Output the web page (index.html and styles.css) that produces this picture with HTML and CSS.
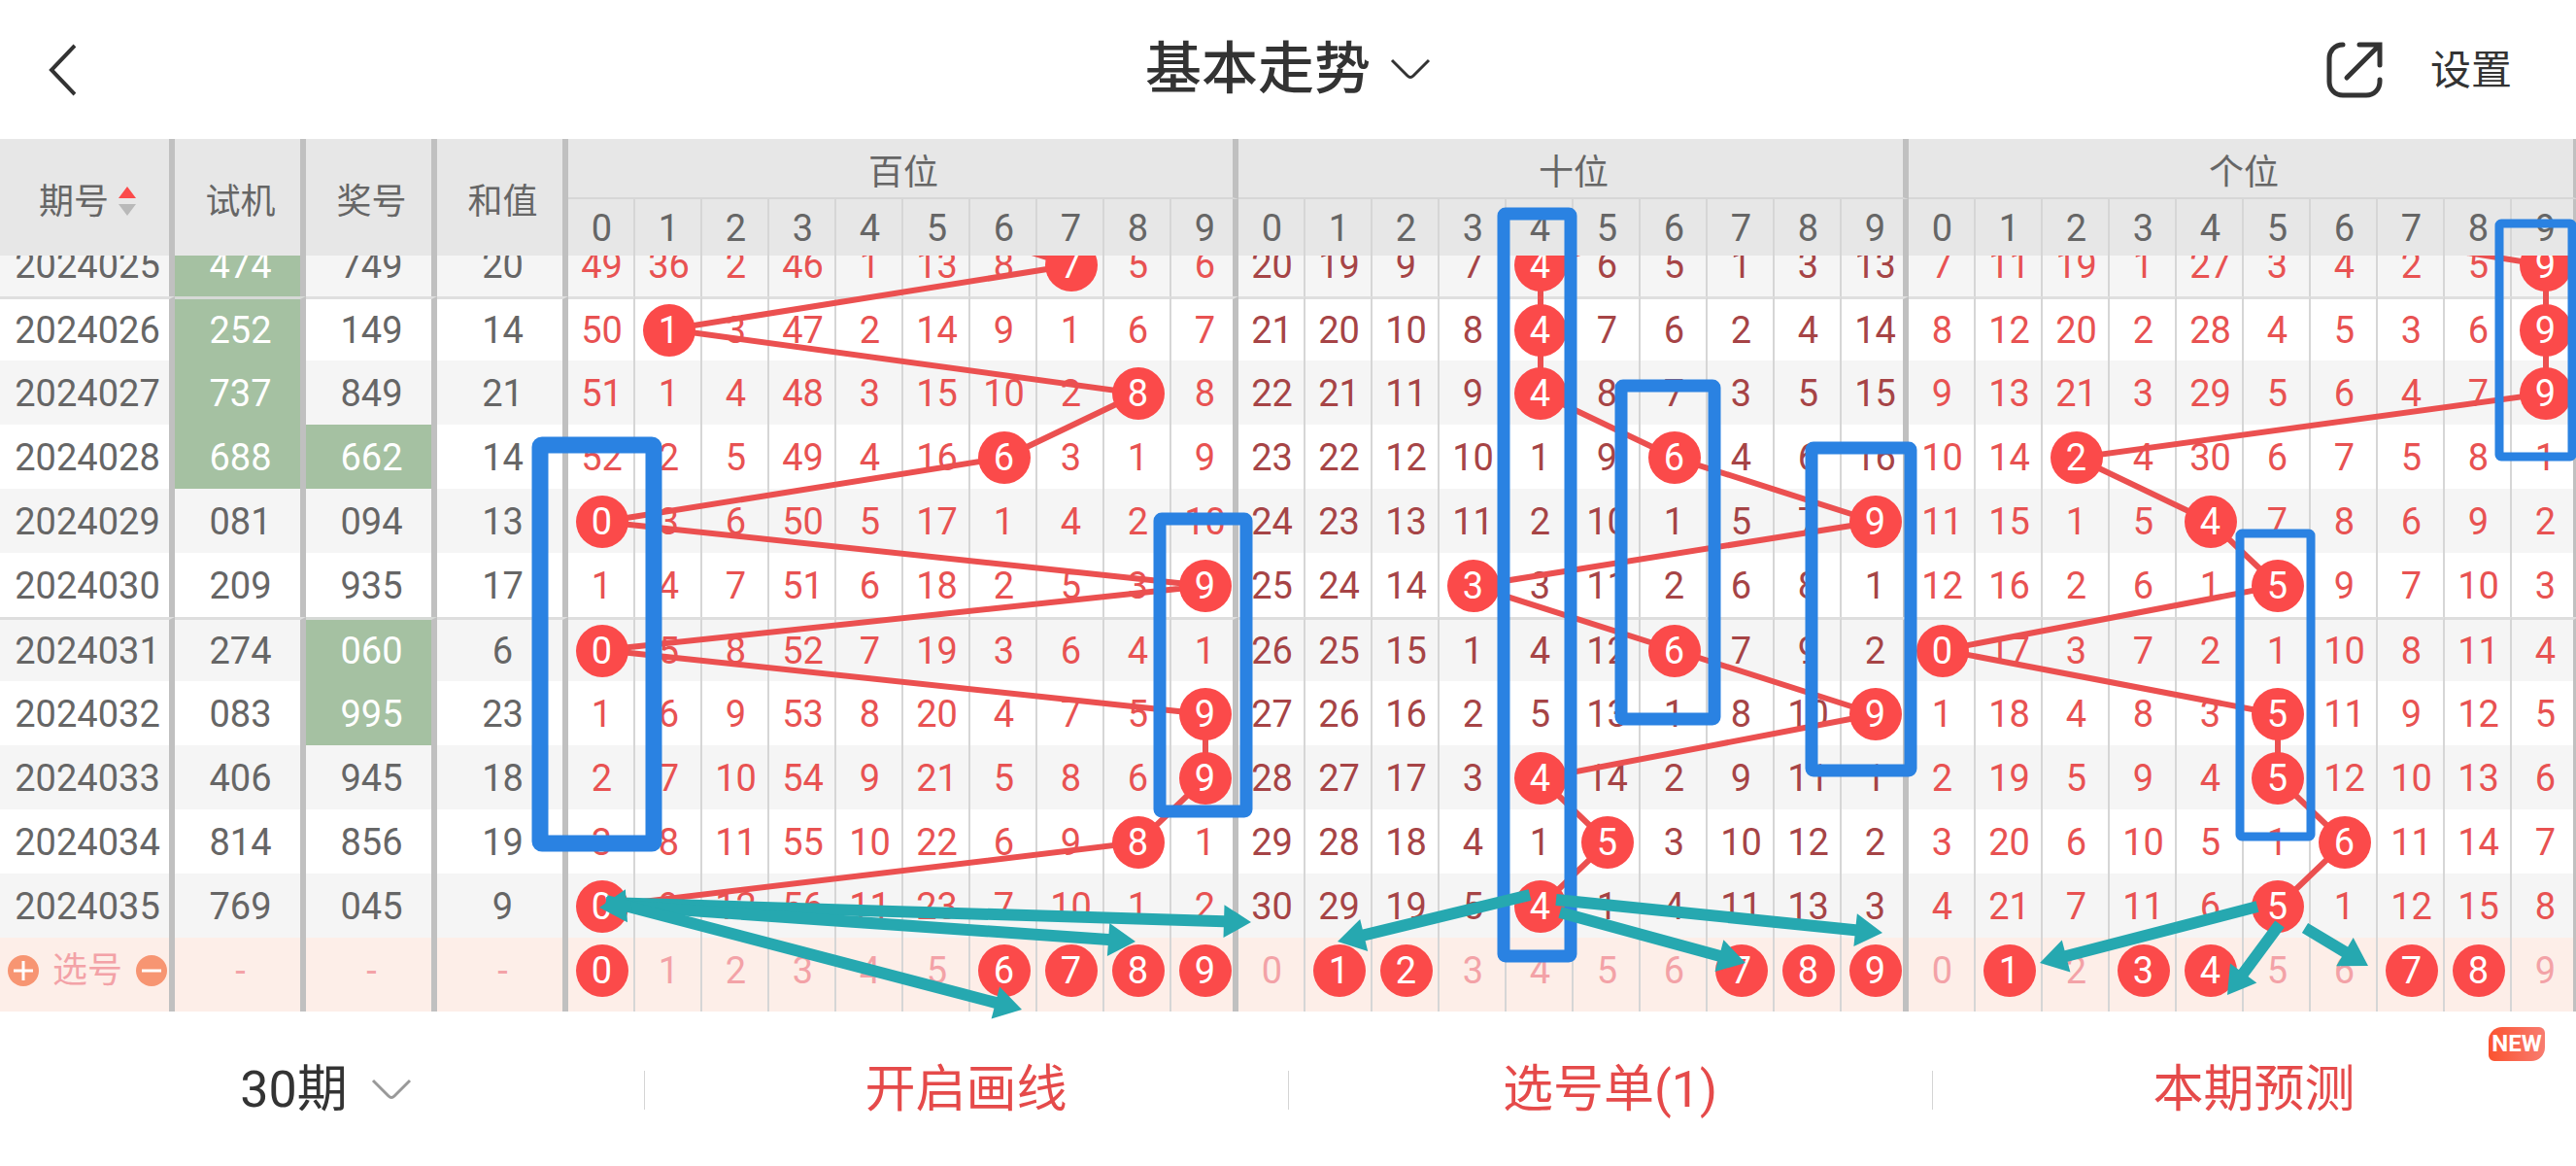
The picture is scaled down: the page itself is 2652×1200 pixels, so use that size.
FILE: index.html
```html
<!DOCTYPE html>
<html lang="zh-CN">
<head>
  <meta charset="UTF-8" />
  <meta name="viewport" content="width=device-width, initial-scale=1.0"/>
  <title>基本走势</title>
  <link rel="stylesheet" href="styles.css">
</head>
<body>

  <header class="topbar">
    <button class="back-btn" type="button" aria-label="返回">
      <svg width="28" height="54" viewBox="0 0 28 54"><path d="M27 2 L3 27 L27 52" /></svg>
    </button>
    <h1 class="title">
      <button class="title-btn" type="button">基本走势
        <svg width="42" height="24" viewBox="0 0 42 24"><path d="M2 2 L18 18 Q21 21 24 18 L40 2" /></svg>
      </button>
    </h1>
    <div class="actions">
      <button class="share-btn" type="button" aria-label="分享">
        <svg width="60" height="60" viewBox="0 0 60 60"><path d="M18 4 C9 4 4 11 4 18 V42 C4 50 10 56 18 56 H42 C50 56 56 50 56 42 V40 M35 4 H56 V25 M22 38 L55 5" /></svg>
      </button>
      <button class="settings-btn" type="button">设置</button>
    </div>
  </header>

  <main class="chart">
    <table class="trend trend-head">
      <colgroup id="head-cols"></colgroup>
      <thead>
        <tr class="head-top">
          <th rowspan="2" class="sep">期号<span class="sort"><i class="up"></i><i class="down"></i></span></th>
          <th rowspan="2" class="sep">试机</th>
          <th rowspan="2" class="sep">奖号</th>
          <th rowspan="2" class="sep">和值</th>
          <th colspan="10" class="sep place">百位</th>
          <th colspan="10" class="sep place">十位</th>
          <th colspan="10" class="sep place">个位</th>
        </tr>
        <tr class="head-digits" id="head-digits"></tr>
      </thead>
    </table>

    <div class="trend-scroll">
      <div class="trend-inner">
        <table class="trend trend-body">
          <colgroup id="body-cols"></colgroup>
          <tbody id="rows"></tbody>
        </table>
        <svg class="lines" id="lines" viewBox="0 0 2655 802" preserveAspectRatio="none"></svg>
      </div>
    </div>

    <!-- hand-drawn marks on top of the chart -->
    <svg class="marks" viewBox="0 0 2652 898" preserveAspectRatio="none">
      <g class="boxes">
        <rect x="556" y="315" width="117" height="410" rx="2" stroke-width="17" />
        <rect x="1194" y="391" width="89" height="301" rx="2" stroke-width="13" />
        <rect x="1548" y="77" width="69" height="764" rx="2" stroke-width="13" />
        <rect x="1669" y="254" width="96" height="343" rx="2" stroke-width="13" />
        <rect x="1865" y="318" width="102" height="332" rx="2" stroke-width="13" />
        <rect x="2573" y="87" width="75" height="240" rx="2" stroke-width="9" />
        <rect x="2306" y="406" width="73" height="312" rx="2" stroke-width="9" />
      </g>
      <g class="arrows" id="arrows"></g>
    </svg>
  </main>

  <nav class="bottombar">
    <button type="button" class="tab tab-dark">30期
      <svg width="42" height="24" viewBox="0 0 42 24"><path d="M2 2 L18 18 Q21 21 24 18 L40 2" /></svg>
    </button>
    <button type="button" class="tab">开启画线</button>
    <button type="button" class="tab">选号单(1)</button>
    <button type="button" class="tab">本期预测<span class="badge">NEW</span></button>
  </nav>

  <script src="script.js"></script>
</body>
</html>
```
FILE: styles.css
```css
* {
  box-sizing: border-box;
}

body {
  margin: 0;
  background: #fff;
  color: #333;
  font-family: Roboto, 'Noto Sans CJK SC', sans-serif;
  overflow-x: hidden;
}

button {
  padding: 0;
  border: none;
  background: none;
  font: inherit;
  color: inherit;
  cursor: pointer;
}

svg {
  display: block;
}

/* top bar */
.topbar {
  display: grid;
  grid-template-columns: 1fr auto 1fr;
  align-items: center;
  height: 143px;
  padding: 0 50px 6px;
}

.topbar path,
.tab path {
  fill: none;
  stroke: #333;
  stroke-width: 3;
}

.back-btn {
  justify-self: start;
  padding-top: 6px;
}

.topbar .back-btn path {
  stroke-width: 4;
}

.title {
  margin: 0;
  font-size: 58px;
  font-weight: 500;
}

.title-btn,
.actions,
.tab {
  display: flex;
  align-items: center;
}

.title-btn {
  gap: 20px;
  padding-bottom: 6px;
}

.title-btn svg {
  margin-top: 12px;
}

.actions {
  justify-self: end;
  gap: 48px;
  margin-right: 16px;
}

.share-btn {
  padding-top: 6px;
}

.topbar .share-btn path {
  stroke-width: 5;
  stroke-linecap: round;
}

.settings-btn {
  font-size: 42px;
}

/* chart */
.chart {
  position: relative;
}

.trend {
  width: calc(100% + 3px);
  table-layout: fixed;
  border-collapse: separate;
  border-spacing: 0;
  text-align: center;
  color: #666;
}

.col-issue {
  width: 180px;
}

.col-info {
  width: 135px;
}

.trend th,
.trend td {
  padding: 2px 0 0 2px;
  border-right: 2px solid #d6d6d6;
  font-weight: 400;
  white-space: nowrap;
}

.trend .sep {
  padding-left: 6px;
  border-right: 6px solid #c0c0c0;
}

.trend-head {
  background: #e7e7e7;
  font-size: 36px;
}

.head-top {
  height: 62px;
}

.head-digits {
  height: 58px;
  font-size: 38px;
}

.trend .place {
  border-bottom: 2px solid #d6d6d6;
}

.sort {
  display: inline-flex;
  flex-direction: column;
  gap: 6px;
  margin: -6px 0 0 10px;
  vertical-align: middle;
}

.sort i {
  border: 9px solid transparent;
}

.sort .up {
  border-top: none;
  border-bottom: 12px solid #fb4a4a;
}

.sort .down {
  border-bottom: none;
  border-top: 12px solid #b9b9b9;
}

.trend-scroll {
  overflow: hidden;
}

.trend-inner {
  position: relative;
  margin-top: -24px;
}

.trend-body {
  font-size: 38px;
  line-height: 54px;
}

.trend-body tr {
  height: 66px;
}

.trend-body tr:nth-child(odd) {
  background: #f5f5f5;
}

.trend-body .block-start td {
  padding-top: 0;
  border-top: 3px solid rgba(220, 220, 220, 0.9);
}

.trend-body .miss-a {
  color: #e85252;
}

.trend-body .miss-b {
  color: #a64446;
}

.trend-body .pair {
  background: #a5c1a2;
  color: #fff;
}

.ball {
  position: relative;
  z-index: 2;
  display: block;
  width: 54px;
  height: 54px;
  margin: 0 auto;
  border-radius: 50%;
  background: #fb4a4a;
  color: #fff;
}

.trend-body .pick-row {
  height: 76px;
  background: #fdeee8;
  color: #f3a2a7;
}

.trend-body .pick-row td {
  padding-bottom: 10px;
}

.pick {
  width: 54px;
  height: 54px;
}

.pick.ball {
  color: #fff;
}

.pick-tools {
  display: flex;
  align-items: center;
  justify-content: center;
  gap: 14px;
  font-size: 36px;
}

.step {
  width: 32px;
  height: 32px;
  border-radius: 50%;
  background: #f79572;
}

.step svg {
  margin: 0 auto;
}

.step path {
  stroke: #fff;
  stroke-width: 3;
}

.lines,
.marks {
  position: absolute;
  top: 0;
  left: 0;
  height: 100%;
  pointer-events: none;
}

.lines {
  z-index: 1;
  width: calc(100% + 3px);
}

.lines polyline {
  fill: none;
  stroke: #eb5050;
  stroke-width: 6;
}

.marks {
  z-index: 3;
  width: 100%;
  overflow: visible;
}

.boxes rect {
  fill: none;
  stroke: #2a82e2;
}

.arrows polygon {
  fill: #26a8b0;
}

/* bottom bar */
.bottombar {
  display: grid;
  grid-template-columns: repeat(4, 1fr);
  height: 159px;
}

.tab {
  position: relative;
  justify-content: center;
  gap: 24px;
  padding-bottom: 8px;
  font-size: 52px;
  color: #e54a4a;
}

.tab + .tab::before {
  content: '';
  position: absolute;
  left: 0;
  top: 61px;
  width: 1px;
  height: 40px;
  background: #d5d5d5;
}

.tab-dark {
  padding-left: 8px;
  color: #333;
}

.tab svg {
  margin-top: 10px;
}

.tab path {
  stroke: #999;
}

.badge {
  position: absolute;
  top: 16px;
  right: 32px;
  width: 58px;
  height: 35px;
  border-radius: 14px 6px 14px 6px;
  background: linear-gradient(90deg, #fb5330, #f87c70);
  color: #fff;
  font-size: 24px;
  font-weight: 700;
  line-height: 35px;
}
```
FILE: script.js
```js
// issue, test number, winning number
const draws = [
  ['2024025', '474', '749'],
  ['2024026', '252', '149'],
  ['2024027', '737', '849'],
  ['2024028', '688', '662'],
  ['2024029', '081', '094'],
  ['2024030', '209', '935'],
  ['2024031', '274', '060'],
  ['2024032', '083', '995'],
  ['2024033', '406', '945'],
  ['2024034', '814', '856'],
  ['2024035', '769', '045']
];

// misses counted up to the issue before the first row
const misses = [
  [48, 35, 1, 45, 0, 12, 7, 0, 4, 5],
  [19, 18, 8, 6, 0, 5, 4, 0, 2, 12],
  [6, 10, 18, 0, 26, 2, 3, 1, 4, 0]
];
const previous = '473';
const picks = [[0, 6, 7, 8, 9], [1, 2, 7, 8, 9], [1, 3, 4, 7, 8]];
const places = [0, 1, 2];
const digits = [0, 1, 2, 3, 4, 5, 6, 7, 8, 9];

const cols = '<col class="col-issue"><col class="col-info"><col class="col-info"><col class="col-info">' + '<col>'.repeat(30);
document.getElementById('head-cols').innerHTML = cols;
document.getElementById('body-cols').innerHTML = cols;

const sep = d => d === 9 ? 'sep' : '';

document.getElementById('head-digits').innerHTML = places.map(() =>
  digits.map(d => `<th class="${sep(d)}">${d}</th>`).join('')
).join('');

const isPair = n => new Set(n).size < 3;

let html = '';
draws.forEach(([issue, test, win], i) => {
  const sum = [...win].reduce((a, b) => a + Number(b), 0);
  html += `<tr class="${i % 5 === 1 ? 'block-start' : ''}">
    <td class="sep">${issue}</td>
    <td class="sep ${isPair(test) ? 'pair' : ''}">${test}</td>
    <td class="sep ${isPair(win) ? 'pair' : ''}">${win}</td>
    <td class="sep">${sum}</td>`;
  places.forEach(p => {
    digits.forEach(d => {
      const hit = Number(win[p]) === d;
      misses[p][d] = hit ? 0 : misses[p][d] + 1;
      html += `<td class="${p === 1 ? 'miss-b' : 'miss-a'} ${sep(d)}">${hit ? `<span class="ball">${d}</span>` : misses[p][d]}</td>`;
    });
  });
  html += '</tr>';
});

html += `<tr class="pick-row">
  <td class="sep"><div class="pick-tools">
    <button type="button" class="step" aria-label="增加"><svg width="20" height="20" viewBox="0 0 20 20"><path d="M0 10 H20 M10 0 V20" /></svg></button>
    选号
    <button type="button" class="step" aria-label="减少"><svg width="20" height="20" viewBox="0 0 20 20"><path d="M0 10 H20" /></svg></button>
  </div></td>
  <td class="sep">-</td><td class="sep">-</td><td class="sep">-</td>`;
places.forEach(p => {
  digits.forEach(d => {
    html += `<td class="${sep(d)}"><button type="button" class="pick ${picks[p].includes(d) ? 'ball' : ''}">${d}</button></td>`;
  });
});
html += '</tr>';
document.getElementById('rows').innerHTML = html;

// trend lines join the winning digits of each place
document.getElementById('lines').innerHTML = places.map(p => {
  const points = [previous, ...draws.map(d => d[2])].map((win, i) =>
    `${585 + p * 690 + win[p] * 69 + 35},${i * 66 - 32}`);
  return `<polyline points="${points.join(' ')}" />`;
}).join('');

// arrows: start x, start y, tip x, tip y
const arrows = [
  [624, 786, 1288, 806],
  [624, 788, 1169, 826],
  [624, 784, 1052, 896],
  [650, 789, 617, 791],
  [1575, 778, 1377, 826],
  [1606, 796, 1797, 848],
  [1602, 783, 1938, 817],
  [2324, 790, 2100, 848],
  [2347, 808, 2293, 881],
  [2373, 812, 2438, 851]
];

function arrowPoints([x1, y1, x2, y2]) {
  const len = Math.hypot(x2 - x1, y2 - y1);
  const ux = (x2 - x1) / len;
  const uy = (y2 - y1) / len;
  const neck = len - 28;
  const shape = [[0, -6], [neck, -6], [neck, -17], [len, 0], [neck, 17], [neck, 6], [0, 6]];
  return shape.map(([a, b]) =>
    `${(x1 + a * ux - b * uy).toFixed(1)},${(y1 + a * uy + b * ux).toFixed(1)}`).join(' ');
}

document.getElementById('arrows').innerHTML = arrows.map(a => `<polygon points="${arrowPoints(a)}" />`).join('');
```
